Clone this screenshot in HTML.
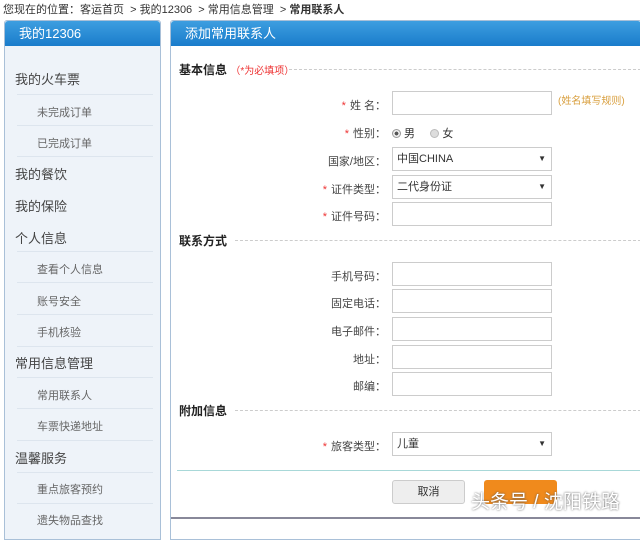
<!DOCTYPE html>
<html><head><meta charset="utf-8"><style>
*{margin:0;padding:0;box-sizing:border-box}
body{width:640px;height:520px;overflow:hidden;background:#fff;font-family:"Liberation Sans","Noto Sans CJK SC",sans-serif;font-size:12px;color:#333;position:relative}
.abs{position:absolute}
.crumb{left:3px;top:1px;font-size:11px;color:#333;white-space:nowrap}
.side{left:4px;top:20px;width:157px;height:520px;border:1px solid #a9c0d8;background:#eef3f9;border-radius:3px 3px 0 0}
.hd{height:25px;background:linear-gradient(#3d9ee0,#1a7ccb);color:#fff;font-size:13px;line-height:25px;padding-left:14px;border-radius:3px 3px 0 0}
.it{position:absolute;left:10px;font-size:13px;color:#444}
.sub{position:absolute;left:32px;font-size:11px;color:#666}
.sep{position:absolute;left:12px;width:136px;height:1px;background:#dde5ee}
.main{left:170px;top:20px;width:472px;height:520px;border:1px solid #a9c0d8;border-radius:3px 3px 0 0}
.sec{position:absolute;left:8px;font-size:12px;font-weight:bold;color:#222}
.dash{position:absolute;height:0;border-top:1px dashed #ccc}
.lb{position:absolute;right:255px;font-size:11px;color:#444;text-align:right;white-space:nowrap}
.lb i{color:#e33;font-style:normal;margin-right:4px}
.in{position:absolute;left:221px;width:160px;height:24px;border:1px solid #ccc;background:#fff;font-size:11px;line-height:22px;padding-left:4px}
.in b{position:absolute;right:5px;top:0;font-size:8px;font-weight:normal}
</style></head><body>
<div class="abs crumb">您现在的位置：客运首页 &nbsp;&gt; 我的12306 &nbsp;&gt; 常用信息管理 &nbsp;&gt; <b>常用联系人</b></div>
<div class="abs side">
<div class="hd">我的12306</div>
<div class="it" style="top:48px">我的火车票</div>
<div class="sep" style="top:73px"></div>
<div class="sub" style="top:83px">未完成订单</div>
<div class="sep" style="top:104px"></div>
<div class="sub" style="top:114px">已完成订单</div>
<div class="sep" style="top:135px"></div>
<div class="it" style="top:143px">我的餐饮</div>
<div class="it" style="top:175px">我的保险</div>
<div class="it" style="top:207px">个人信息</div>
<div class="sep" style="top:230px"></div>
<div class="sub" style="top:240px">查看个人信息</div>
<div class="sep" style="top:261px"></div>
<div class="sub" style="top:272px">账号安全</div>
<div class="sep" style="top:293px"></div>
<div class="sub" style="top:303px">手机核验</div>
<div class="sep" style="top:325px"></div>
<div class="it" style="top:332px">常用信息管理</div>
<div class="sep" style="top:356px"></div>
<div class="sub" style="top:366px">常用联系人</div>
<div class="sep" style="top:387px"></div>
<div class="sub" style="top:397px">车票快递地址</div>
<div class="sep" style="top:419px"></div>
<div class="it" style="top:427px">温馨服务</div>
<div class="sep" style="top:451px"></div>
<div class="sub" style="top:460px">重点旅客预约</div>
<div class="sep" style="top:482px"></div>
<div class="sub" style="top:491px">遗失物品查找</div>
</div>
<div class="abs main">
<div class="hd">添加常用联系人</div>
<div class="sec" style="top:40px">基本信息 <span style="color:#e33;font-weight:normal;font-size:10px">（*为必填项）</span></div>
<div class="dash" style="left:118px;right:0;top:48px"></div>
<div class="lb" style="top:76px"><i>*</i>姓 名：</div><div class="in" style="top:70px"></div>
<div class="abs" style="left:387px;top:71px;font-size:10px;color:#d9a040">(姓名填写规则)</div>
<div class="lb" style="top:104px"><i>*</i>性别：</div>
<div class="abs" style="left:221px;top:104px;font-size:11px"><span style="display:inline-block;width:9px;height:9px;border:1px solid #999;border-radius:50%;background:radial-gradient(#555 35%,#eee 40%);vertical-align:-1px"></span> 男 &nbsp;&nbsp;&nbsp;&nbsp;<span style="display:inline-block;width:9px;height:9px;border:1px solid #bbb;border-radius:50%;background:#ddd;vertical-align:-1px"></span> 女</div>
<div class="lb" style="top:132px">国家/地区：</div><div class="in" style="top:126px">中国CHINA<b>▼</b></div>
<div class="lb" style="top:160px"><i>*</i>证件类型：</div><div class="in" style="top:154px">二代身份证<b>▼</b></div>
<div class="lb" style="top:187px"><i>*</i>证件号码：</div><div class="in" style="top:181px"></div>
<div class="sec" style="top:211px">联系方式</div>
<div class="dash" style="left:64px;right:0;top:219px"></div>
<div class="lb" style="top:247px">手机号码：</div><div class="in" style="top:241px"></div>
<div class="lb" style="top:274px">固定电话：</div><div class="in" style="top:268px"></div>
<div class="lb" style="top:302px">电子邮件：</div><div class="in" style="top:296px"></div>
<div class="lb" style="top:330px">地址：</div><div class="in" style="top:324px"></div>
<div class="lb" style="top:357px">邮编：</div><div class="in" style="top:351px"></div>
<div class="sec" style="top:381px">附加信息</div>
<div class="dash" style="left:64px;right:0;top:389px"></div>
<div class="lb" style="top:417px"><i>*</i>旅客类型：</div><div class="in" style="top:411px">儿童<b>▼</b></div>
<div class="abs" style="left:6px;right:0;top:449px;height:1px;background:#a8d8d8"></div>
<div class="abs" style="left:221px;top:459px;width:73px;height:24px;border:1px solid #ccc;border-radius:3px;background:#eee;text-align:center;line-height:22px;font-size:11px">取消</div>
<div class="abs" style="left:313px;top:459px;width:73px;height:24px;border-radius:3px;background:#f08a1c"></div>
<div class="abs" style="left:300px;top:466px;font-size:19px;color:#fff;text-shadow:0 0 2px #555;white-space:nowrap">头条号 / 沈阳铁路</div>
<div class="abs" style="left:0;right:0;top:496px;height:2px;background:#889"></div>
</div>
</body></html>
